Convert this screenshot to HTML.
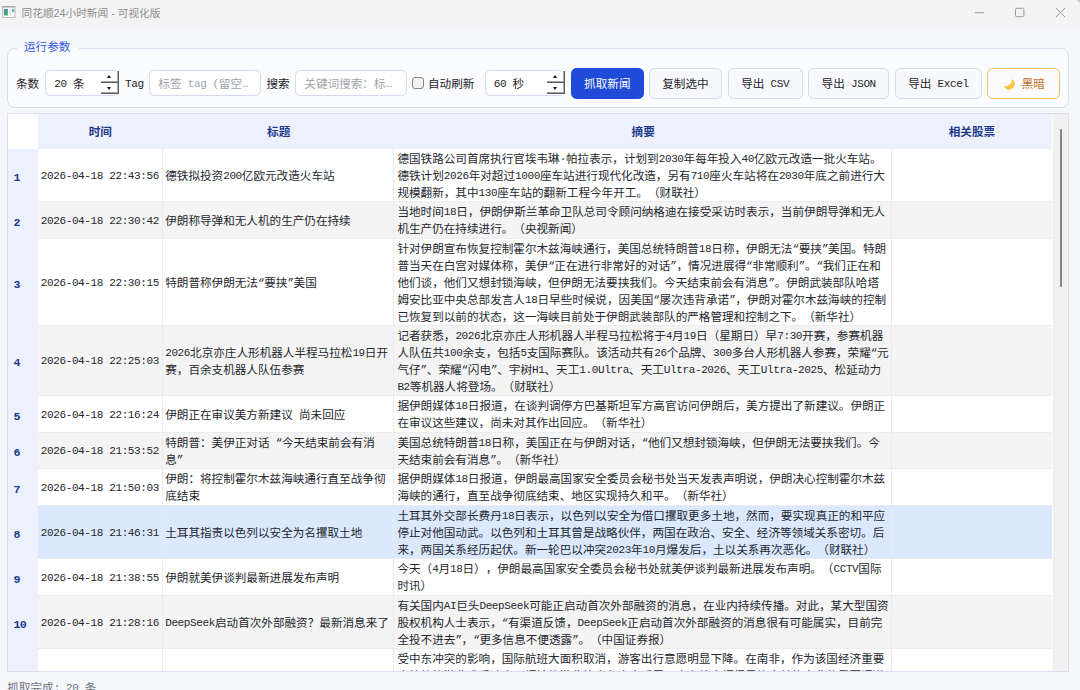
<!DOCTYPE html>
<html lang="zh-CN">
<head>
<meta charset="utf-8">
<title>同花顺24小时新闻 - 可视化版</title>
<style>
*{box-sizing:border-box;margin:0;padding:0}
html,body{width:1080px;height:690px;overflow:hidden}
body{position:relative;background:#f6f7fb;color:#24282e;
  font-family:"Liberation Mono","Noto Sans CJK SC",monospace;font-size:11.6px;line-height:16.94px;text-spacing-trim:space-all}
.l{font-size:.95em;line-height:0;letter-spacing:-.392px;vertical-align:.8px}
#titlebar{position:absolute;left:0;top:0;width:1080px;height:26.6px;background:#f3f3f3;
  font-family:"Liberation Sans","Noto Sans CJK SC",sans-serif;font-size:10.7px;color:#8e8e8e}
#titlebar .cap{position:absolute;left:21.5px;top:0;height:26px;line-height:26px;white-space:nowrap}
#appicon{position:absolute;left:2px;top:6.1px}
.wc{position:absolute;top:0}
#group{position:absolute;left:7px;top:48px;width:1062px;height:60px;border:1px solid #d6ddea;border-radius:8px;background:#fbfcfe}
#gtitle{position:absolute;left:16.7px;top:39.5px;padding:0 8.5px 0 7.3px;background:linear-gradient(#f6f7fb 0,#f6f7fb 8.5px,#fbfcfe 8.5px);color:#3358de;white-space:nowrap;line-height:16px}
.lbl{position:absolute;top:72.2px;height:25.5px;line-height:25.5px;white-space:nowrap;color:#1f2328}
.inp{position:absolute;top:70px;height:25.8px;border:1px solid #d3daea;border-radius:5.5px;background:#fff;line-height:23.5px;white-space:nowrap;overflow:hidden}
.inp .ph{color:#a0a5ac;padding-left:8.3px;position:relative;top:2.2px}
.inp .val{padding-left:8.3px;color:#1f2328;position:relative;top:2.2px}
.spin{position:absolute;top:71.2px;width:18.1px;height:23.1px;background:#fff}
.spin i{position:absolute;left:0;right:0;height:50%;border-right:1px solid #5c5c5c;border-bottom:1px solid #5c5c5c;background:#fff;box-shadow:inset -.9px -.9px 0 #a2a2a2}
.spin i.u{top:0}.spin i.d{bottom:0}
.spin i:after{content:"";position:absolute;left:6.9px;top:50%;border-left:2.7px solid transparent;border-right:2.7px solid transparent}
.spin i.u:after{border-bottom:3px solid #16181d;margin-top:-1.5px}
.spin i.d:after{border-top:3px solid #16181d;margin-top:-.6px}
.btn{position:absolute;top:67.8px;height:31px;padding-top:1.4px;border:1px solid #d5dbe8;border-radius:5.5px;background:#f8f9fc;line-height:29px;text-align:center;white-space:nowrap;color:#1f2328}
.btn.pri{background:#1f4bd8;border-color:#1f4bd8;color:#fff}
.btn.dark{background:#fcfbfb;border:1.3px solid #f3bb62;color:#c0701f;text-align:left}
#cb{position:absolute;left:412px;top:77px;width:12px;height:12px;border:1.2px solid #848484;border-radius:3px;background:#f2f2f2}
#table{position:absolute;left:7px;top:113px;width:1062px;height:559px;border:1px solid #d9dfec;background:#fff;overflow:hidden}
#table>div{position:absolute}
#corner{left:0;top:0;width:29.5px;height:35px;background:#fff}
#hdr{left:0;top:0;width:1043.8px;height:35px}
.hc{position:absolute;top:0;height:35px;line-height:35px;text-align:center;background:#edf1fe;color:#1e3a8a;font-weight:bold;font-family:"Liberation Sans","Noto Sans CJK SC",sans-serif}
#rows{left:0;top:0;width:1043.8px;height:557px}
.row{position:absolute;left:0;width:1043.8px;background:#fff}
.row.alt{background:#f4f4f4}
.row.sel{background:#dbe8fe}
.rh{position:absolute;left:0;top:0;height:100%;background:#edf1fe;color:#1e3a8a;font-weight:bold;display:flex;align-items:center;padding-left:5.6px}
.rh span{position:relative;top:2.6px}
.rh .l{font-size:1em;top:0;vertical-align:0;letter-spacing:-.7px}
.c{position:absolute;top:0;height:100%;border-right:1px solid #e9ebee;border-bottom:1px solid #eaecef;display:flex;align-items:center;white-space:nowrap;overflow:hidden;padding-left:2.2px}
.c0{padding-left:3.3px}
.c2{padding-left:3px}
.c3{border-right:none}
.t{white-space:nowrap;position:relative;top:2.4px}
#vsb{left:1043.8px;top:0;width:17.2px;height:557px;background:#f0f0f0;border-left:1px solid #fbfbfd}
#thumb{position:absolute;left:7.7px;top:15px;width:2px;height:158px;background:#858585;border-radius:1px}
#status{position:absolute;left:7.3px;top:681px;line-height:16.9px;color:#6b7280;white-space:nowrap}
#wcorner{position:absolute;right:-1.2px;top:-1.2px;width:7px;height:7px;border-top:1.2px solid #bdbdbd;border-right:1.2px solid #bdbdbd;border-top-right-radius:5.5px}

</style>
</head>
<body>
<div id="titlebar">
<svg id="appicon" width="14" height="13" viewBox="0 0 14 13"><defs><linearGradient id="ig" x1="0" y1="0" x2=".6" y2="1"><stop offset="0" stop-color="#5b86c8"/><stop offset="1" stop-color="#3fae5a"/></linearGradient></defs><rect x=".4" y=".4" width="12.6" height="11.2" fill="#fdfdfe" stroke="#aeb0b8" stroke-width=".8"/><rect x=".4" y=".2" width="12.6" height="1.3" fill="#a3a5ab"/><rect x="1.8" y="2.9" width="4.1" height="6.6" fill="url(#ig)"/><rect x="7" y="2.9" width="2.3" height="6.6" fill="#e6e6e8"/><rect x="10" y="2.9" width="2.2" height="3.3" fill="url(#ig)" opacity=".75"/></svg>
<div class="cap">同花顺24小时新闻 - 可视化版</div>
<svg class="wc" style="left:970px" width="100" height="26" viewBox="0 0 100 26" fill="none" stroke="#9b9b9b" stroke-width="1"><path d="M5 12.7H14"/><rect x="45.5" y="8.3" width="8.4" height="8.4" rx="1.2"/><path d="M86 8L95 17M95 8L86 17"/></svg>
<div id="wcorner"></div>
</div>
<div id="group"></div>
<div id="gtitle">运行参数</div>
<div class="lbl" style="left:16px">条数</div>
<div class="inp" style="left:45px;width:73.5px"><span class="val"><span class="l">20 </span>条</span></div><div class="spin" style="left:100.5px"><i class="u"></i><i class="d"></i></div>
<div class="lbl" style="left:125px"><span class="l">Tag</span></div>
<div class="inp" style="left:149px;width:111.5px"><span class="ph">标签<span class="l"> tag (</span>留空<span class="l">…</span></span></div>
<div class="lbl" style="left:266.5px">搜索</div>
<div class="inp" style="left:295px;width:111.5px"><span class="ph">关键词搜索：标<span class="l">…</span></span></div>
<div id="cb"></div>
<div class="lbl" style="left:428px">自动刷新</div>
<div class="inp" style="left:484.5px;width:80px"><span class="val"><span class="l">60 </span>秒</span></div><div class="spin" style="left:546.5px"><i class="u"></i><i class="d"></i></div>
<div class="btn pri" style="left:570.8px;width:73px">抓取新闻</div>
<div class="btn" style="left:649px;width:72.8px">复制选中</div>
<div class="btn" style="left:727.5px;width:75.4px">导出<span class="l"> CSV</span></div>
<div class="btn" style="left:808.3px;width:80.8px">导出<span class="l"> JSON</span></div>
<div class="btn" style="left:895.2px;width:86.4px">导出<span class="l"> Excel</span></div>
<div class="btn dark" style="left:987.4px;width:72.3px"><svg width="12" height="12" viewBox="0 0 12 12" style="position:absolute;left:14.3px;top:9.4px"><path d="M8.85 1.06A5.7 5.7 0 1 1 .64 7.95A6.3 6.3 0 0 0 8.85 1.06Z" fill="#f9c63c"/></svg><span style="position:absolute;left:33.3px;top:0;line-height:31.2px">黑暗</span></div>

<div id="table">
<div id="corner"></div>
<div id="hdr"><div class="hc" style="left:29.5px;width:125.5px">时间</div><div class="hc" style="left:155px;width:231.4px">标题</div><div class="hc" style="left:386.4px;width:497.6px">摘要</div><div class="hc" style="left:884px;width:159.8px">相关股票</div></div>
<div id="rows">
<div class="row" style="top:35px;height:53px"><div class="rh" style="width:29.5px"><span><span class="l">1</span></span></div><div class="c c0" style="left:29.5px;width:125.5px"><div class="t"><span class="l">2026-04-18 22:43:56</span></div></div><div class="c c1" style="left:155px;width:231.4px"><div class="t">德铁拟投资<span class="l">200</span>亿欧元改造火车站</div></div><div class="c c2" style="left:386.4px;width:497.6px"><div class="t">德国铁路公司首席执行官埃韦琳<span class="l">·</span>帕拉表示，计划到<span class="l">2030</span>年每年投入<span class="l">40</span>亿欧元改造一批火车站。<br>德铁计划<span class="l">2026</span>年对超过<span class="l">1000</span>座车站进行现代化改造，另有<span class="l">710</span>座火车站将在<span class="l">2030</span>年底之前进行大<br>规模翻新，其中<span class="l">130</span>座车站的翻新工程今年开工。（财联社）</div></div><div class="c c3" style="left:884px;width:159.8px"></div></div>
<div class="row alt" style="top:88px;height:37px"><div class="rh" style="width:29.5px"><span><span class="l">2</span></span></div><div class="c c0" style="left:29.5px;width:125.5px"><div class="t"><span class="l">2026-04-18 22:30:42</span></div></div><div class="c c1" style="left:155px;width:231.4px"><div class="t">伊朗称导弹和无人机的生产仍在持续</div></div><div class="c c2" style="left:386.4px;width:497.6px"><div class="t">当地时间<span class="l">18</span>日，伊朗伊斯兰革命卫队总司令顾问纳格迪在接受采访时表示，当前伊朗导弹和无人<br>机生产仍在持续进行。（央视新闻）</div></div><div class="c c3" style="left:884px;width:159.8px"></div></div>
<div class="row" style="top:125px;height:87px"><div class="rh" style="width:29.5px"><span><span class="l">3</span></span></div><div class="c c0" style="left:29.5px;width:125.5px"><div class="t"><span class="l">2026-04-18 22:30:15</span></div></div><div class="c c1" style="left:155px;width:231.4px"><div class="t">特朗普称伊朗无法<span class="l">“</span>要挟<span class="l">”</span>美国</div></div><div class="c c2" style="left:386.4px;width:497.6px"><div class="t">针对伊朗宣布恢复控制霍尔木兹海峡通行，美国总统特朗普<span class="l">18</span>日称，伊朗无法<span class="l">“</span>要挟<span class="l">”</span>美国。特朗<br>普当天在白宫对媒体称，美伊<span class="l">“</span>正在进行非常好的对话<span class="l">”</span>，情况进展得<span class="l">“</span>非常顺利<span class="l">”</span>。<span class="l">“</span>我们正在和<br>他们谈，他们又想封锁海峡，但伊朗无法要挟我们。今天结束前会有消息<span class="l">”</span>。伊朗武装部队哈塔<br>姆安比亚中央总部发言人<span class="l">18</span>日早些时候说，因美国<span class="l">“</span>屡次违背承诺<span class="l">”</span>，伊朗对霍尔木兹海峡的控制<br>已恢复到以前的状态，这一海峡目前处于伊朗武装部队的严格管理和控制之下。（新华社）</div></div><div class="c c3" style="left:884px;width:159.8px"></div></div>
<div class="row alt" style="top:212px;height:70px"><div class="rh" style="width:29.5px"><span><span class="l">4</span></span></div><div class="c c0" style="left:29.5px;width:125.5px"><div class="t"><span class="l">2026-04-18 22:25:03</span></div></div><div class="c c1" style="left:155px;width:231.4px"><div class="t"><span class="l">2026</span>北京亦庄人形机器人半程马拉松<span class="l">19</span>日开<br>赛，百余支机器人队伍参赛</div></div><div class="c c2" style="left:386.4px;width:497.6px"><div class="t">记者获悉，<span class="l">2026</span>北京亦庄人形机器人半程马拉松将于<span class="l">4</span>月<span class="l">19</span>日（星期日）早<span class="l">7:30</span>开赛，参赛机器<br>人队伍共<span class="l">100</span>余支，包括<span class="l">5</span>支国际赛队。该活动共有<span class="l">26</span>个品牌、<span class="l">300</span>多台人形机器人参赛，荣耀<span class="l">“</span>元<br>气仔<span class="l">”</span>、荣耀<span class="l">“</span>闪电<span class="l">”</span>、宇树<span class="l">H1</span>、天工<span class="l">1.0Ultra</span>、天工<span class="l">Ultra-2026</span>、天工<span class="l">Ultra-2025</span>、松延动力<br><span class="l">B2</span>等机器人将登场。（财联社）</div></div><div class="c c3" style="left:884px;width:159.8px"></div></div>
<div class="row" style="top:282px;height:37px"><div class="rh" style="width:29.5px"><span><span class="l">5</span></span></div><div class="c c0" style="left:29.5px;width:125.5px"><div class="t"><span class="l">2026-04-18 22:16:24</span></div></div><div class="c c1" style="left:155px;width:231.4px"><div class="t">伊朗正在审议美方新建议<span class="l"> </span>尚未回应</div></div><div class="c c2" style="left:386.4px;width:497.6px"><div class="t">据伊朗媒体<span class="l">18</span>日报道，在谈判调停方巴基斯坦军方高官访问伊朗后，美方提出了新建议。伊朗正<br>在审议这些建议，尚未对其作出回应。（新华社）</div></div><div class="c c3" style="left:884px;width:159.8px"></div></div>
<div class="row alt" style="top:319px;height:36px"><div class="rh" style="width:29.5px"><span><span class="l">6</span></span></div><div class="c c0" style="left:29.5px;width:125.5px"><div class="t"><span class="l">2026-04-18 21:53:52</span></div></div><div class="c c1" style="left:155px;width:231.4px"><div class="t">特朗普：美伊正对话<span class="l"> “</span>今天结束前会有消<br>息<span class="l">”</span></div></div><div class="c c2" style="left:386.4px;width:497.6px"><div class="t">美国总统特朗普<span class="l">18</span>日称，美国正在与伊朗对话，<span class="l">“</span>他们又想封锁海峡，但伊朗无法要挟我们。今<br>天结束前会有消息<span class="l">”</span>。（新华社）</div></div><div class="c c3" style="left:884px;width:159.8px"></div></div>
<div class="row" style="top:355px;height:37px"><div class="rh" style="width:29.5px"><span><span class="l">7</span></span></div><div class="c c0" style="left:29.5px;width:125.5px"><div class="t"><span class="l">2026-04-18 21:50:03</span></div></div><div class="c c1" style="left:155px;width:231.4px"><div class="t">伊朗：将控制霍尔木兹海峡通行直至战争彻<br>底结束</div></div><div class="c c2" style="left:386.4px;width:497.6px"><div class="t">据伊朗媒体<span class="l">18</span>日报道，伊朗最高国家安全委员会秘书处当天发表声明说，伊朗决心控制霍尔木兹<br>海峡的通行，直至战争彻底结束、地区实现持久和平。（新华社）</div></div><div class="c c3" style="left:884px;width:159.8px"></div></div>
<div class="row sel" style="top:392px;height:53px"><div class="rh" style="width:29.5px"><span><span class="l">8</span></span></div><div class="c c0" style="left:29.5px;width:125.5px"><div class="t"><span class="l">2026-04-18 21:46:31</span></div></div><div class="c c1" style="left:155px;width:231.4px"><div class="t">土耳其指责以色列以安全为名攫取土地</div></div><div class="c c2" style="left:386.4px;width:497.6px"><div class="t">土耳其外交部长费丹<span class="l">18</span>日表示，以色列以安全为借口攫取更多土地，然而，要实现真正的和平应<br>停止对他国动武。以色列和土耳其曾是战略伙伴，两国在政治、安全、经济等领域关系密切。后<br>来，两国关系经历起伏。新一轮巴以冲突<span class="l">2023</span>年<span class="l">10</span>月爆发后，土以关系再次恶化。（财联社）</div></div><div class="c c3" style="left:884px;width:159.8px"></div></div>
<div class="row" style="top:445px;height:37px"><div class="rh" style="width:29.5px"><span><span class="l">9</span></span></div><div class="c c0" style="left:29.5px;width:125.5px"><div class="t"><span class="l">2026-04-18 21:38:55</span></div></div><div class="c c1" style="left:155px;width:231.4px"><div class="t">伊朗就美伊谈判最新进展发布声明</div></div><div class="c c2" style="left:386.4px;width:497.6px"><div class="t">今天（<span class="l">4</span>月<span class="l">18</span>日），伊朗最高国家安全委员会秘书处就美伊谈判最新进展发布声明。（<span class="l">CCTV</span>国际<br>时讯）</div></div><div class="c c3" style="left:884px;width:159.8px"></div></div>
<div class="row alt" style="top:482px;height:53px"><div class="rh" style="width:29.5px"><span><span class="l">10</span></span></div><div class="c c0" style="left:29.5px;width:125.5px"><div class="t"><span class="l">2026-04-18 21:28:16</span></div></div><div class="c c1" style="left:155px;width:231.4px"><div class="t"><span class="l">DeepSeek</span>启动首次外部融资？最新消息来了</div></div><div class="c c2" style="left:386.4px;width:497.6px"><div class="t">有关国内<span class="l">AI</span>巨头<span class="l">DeepSeek</span>可能正启动首次外部融资的消息，在业内持续传播。对此，某大型国资<br>股权机构人士表示，<span class="l">“</span>有渠道反馈，<span class="l">DeepSeek</span>正启动首次外部融资的消息很有可能属实，目前完<br>全投不进去<span class="l">”</span>，<span class="l">“</span>更多信息不便透露<span class="l">”</span>。（中国证券报）</div></div><div class="c c3" style="left:884px;width:159.8px"></div></div>
<div class="row" style="top:535px;height:87px"><div class="rh" style="width:29.5px"><span><span class="l">11</span></span></div><div class="c c0" style="left:29.5px;width:125.5px"><div class="t"><span class="l">2026-04-18 21:20:47</span></div></div><div class="c c1" style="left:155px;width:231.4px"><div class="t">中东冲突重创南非旅游业</div></div><div class="c c2" style="left:386.4px;width:497.6px"><div class="t">受中东冲突的影响，国际航班大面积取消，游客出行意愿明显下降。在南非，作为该国经济重要<br>支柱的旅游业遭受冲击。据该旅游业协会负责人透露，中东航空枢纽是旅客前往南非的重要通道<br>之一，航班取消导致大量预订被迫取消，当地酒店、餐饮和交通等相关行业也受到不同程度的波及，<br>业内人士预计，若冲突持续，今年赴南非的国际游客数量将明显少于去年同期，行业正在评估损<br>失。（央视新闻）</div></div><div class="c c3" style="left:884px;width:159.8px"></div></div>
</div>
<div id="vsb"><div id="thumb"></div></div>
</div>
<div id="status">抓取完成<span class="l">: 20 </span>条</div>
</body>
</html>
